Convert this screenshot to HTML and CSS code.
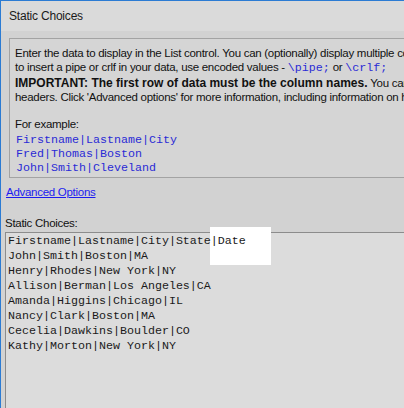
FILE: index.html
```html
<!DOCTYPE html>
<html>
<head>
<meta charset="utf-8">
<link rel="stylesheet" href="styles.css">
</head>
<body>
<div class="window">
  <div class="titlebar">Static Choices</div>
  <div class="content">
    <div class="info">
      <p class="para">Enter the data to display in the List control. You can (optionally) display multiple columns of data by<br>to insert a pipe or crlf in your data, use encoded values - <code class="code">\pipe;</code> or <code class="code">\crlf;</code></p>
      <p class="para"><b class="strong">IMPORTANT: The first row of data must be the column names.</b> You can change the column<br>headers. Click 'Advanced options' for more information, including information on how to</p>
      <p class="para spacer">For example:</p>
      <div class="example">Firstname|Lastname|City<br>Fred|Thomas|Boston<br>John|Smith|Cleveland</div>
    </div>
    <a class="advanced" href="#">Advanced Options</a>
    <div class="label">Static Choices:</div>
    <div class="textarea">
      <div class="highlight"></div>
      <div class="lines">Firstname|Lastname|City|State|Date
John|Smith|Boston|MA
Henry|Rhodes|New York|NY
Allison|Berman|Los Angeles|CA
Amanda|Higgins|Chicago|IL
Nancy|Clark|Boston|MA
Cecelia|Dawkins|Boulder|CO
Kathy|Morton|New York|NY</div>
    </div>
  </div>
</div>
</body>
</html>
```
FILE: styles.css
```css
html, body {
  margin: 0;
  padding: 0;
  background: #d2d2d2;
}
.window {
  width: 404px;
  height: 408px;
  box-sizing: border-box;
  border-left: 1px solid #2b7bd3;
  border-top: 1px solid #2b7bd3;
  background: #d2d2d2;
  overflow: hidden;
  position: relative;
  font-family: "Liberation Sans", Arial, sans-serif;
  font-size: 11.5px;
  letter-spacing: -0.28px;
  color: #111;
}
.titlebar {
  height: 30px;
  line-height: 30px;
  background: #dadada;
  padding-left: 8px;
  font-size: 12px;
  letter-spacing: -0.2px;
  color: #1a1a1a;
}
.content {
  padding: 7px 0 0 4px;
  display: flex;
  flex-direction: column;
  align-items: flex-start;
}
.info {
  margin-left: 4px;
  width: 420px;
  box-sizing: border-box;
  border: 1px solid #a3a3a3;
  background: #d5d5d5;
  padding: 7px 0 2px 5px;
  white-space: nowrap;
  line-height: 14px;
}
.para {
  margin: 0 0 1px 0;
}
.strong {
  font-size: 12px;
  letter-spacing: 0;
}
.spacer {
  margin-top: 13px;
}
.code, .example {
  font-family: "Liberation Mono", "Courier New", monospace;
  font-size: 11.67px;
  letter-spacing: 0;
  color: #2a2ad6;
}
.example {
  padding-top: 1px;
  line-height: 14px;
  padding-left: 1px;
}
.advanced {
  margin-top: 7px;
  margin-left: 1px;
  color: #1c1cf0;
  text-decoration: underline;
  line-height: 15px;
}
.label {
  margin-top: 15px;
  line-height: 16px;
  color: #111;
}
.textarea {
  margin-top: 1px;
  width: 420px;
  height: 200px;
  box-sizing: border-box;
  border: 1px solid #8c8c8c;
  background: #dcdcdc;
  position: relative;
  padding: 1px 0 0 2px;
}
.highlight {
  position: absolute;
  left: 204px;
  top: -6px;
  width: 61px;
  height: 38px;
  background: #ffffff;
}
.lines {
  position: relative;
  white-space: pre;
  font-family: "Liberation Mono", "Courier New", monospace;
  font-size: 11.67px;
  letter-spacing: 0;
  line-height: 15px;
  color: #1a1a1a;
}
```
